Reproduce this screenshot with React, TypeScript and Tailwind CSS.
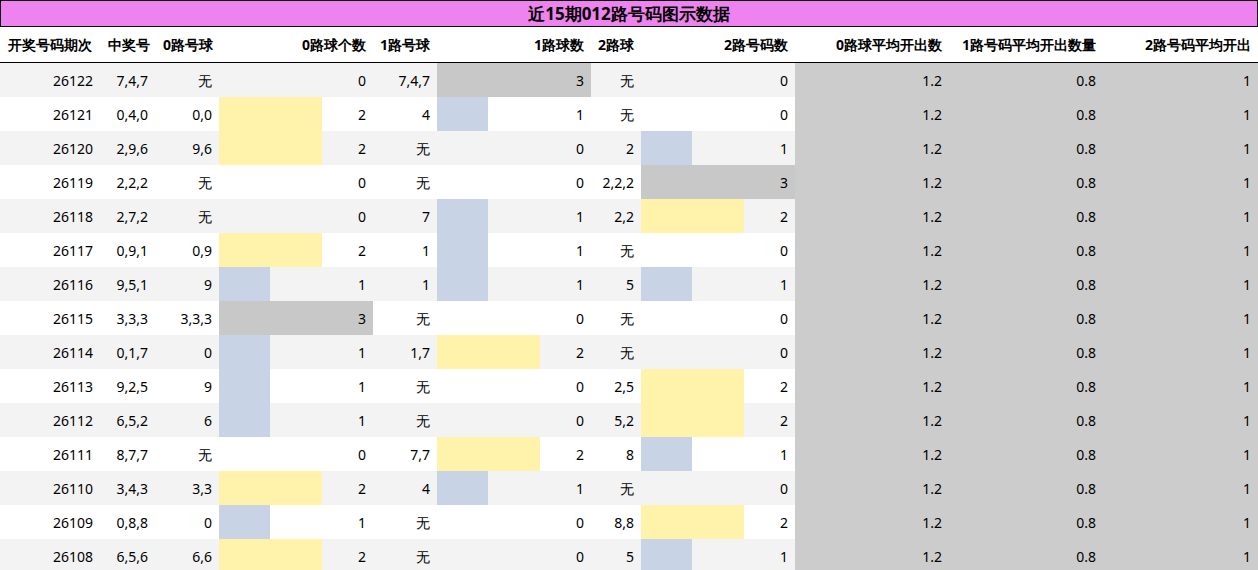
const ROWS: [string, string, string, number, string, number, string, number][] = [
  ["26122", "7,4,7", "无", 0, "7,4,7", 3, "无", 0],
  ["26121", "0,4,0", "0,0", 2, "4", 1, "无", 0],
  ["26120", "2,9,6", "9,6", 2, "无", 0, "2", 1],
  ["26119", "2,2,2", "无", 0, "无", 0, "2,2,2", 3],
  ["26118", "2,7,2", "无", 0, "7", 1, "2,2", 2],
  ["26117", "0,9,1", "0,9", 2, "1", 1, "无", 0],
  ["26116", "9,5,1", "9", 1, "1", 1, "5", 1],
  ["26115", "3,3,3", "3,3,3", 3, "无", 0, "无", 0],
  ["26114", "0,1,7", "0", 1, "1,7", 2, "无", 0],
  ["26113", "9,2,5", "9", 1, "无", 0, "2,5", 2],
  ["26112", "6,5,2", "6", 1, "无", 0, "5,2", 2],
  ["26111", "8,7,7", "无", 0, "7,7", 2, "8", 1],
  ["26110", "3,4,3", "3,3", 2, "4", 1, "无", 0],
  ["26109", "0,8,8", "0", 1, "无", 0, "8,8", 2],
  ["26108", "6,5,6", "6,6", 2, "无", 0, "5", 1],
];

const BAR: Record<number, string> = {
  0: "w-0",
  1: "w-[51px] bg-[#c9d3e6]",
  2: "w-[103px] bg-[#fff2ab]",
  3: "w-full bg-[#c8c8c8]",
};

const COLS = "grid grid-cols-[100px_55px_64px_154px_64px_154px_50px_154px_154px_154px_155px]";

function BarCell({ n }: { n: number }) {
  return (
    <div className="relative h-full">
      <div className={`absolute inset-y-0 left-0 ${BAR[n]}`} />
      <span className="relative flex h-full items-center justify-end pr-[7px]">{n}</span>
    </div>
  );
}

function Cell({ children }: { children: React.ReactNode }) {
  return <div className="flex h-full items-center justify-end pr-[7px]">{children}</div>;
}

export default function App() {
  const heads = ["开奖号码期次", "中奖号", "0路号球", "0路球个数", "1路号球", "1路球数", "2路球", "2路号码数", "0路球平均开出数", "1路号码平均开出数量", "2路号码平均开出"];
  return (
    <div className="w-[1258px] h-[570px] overflow-hidden bg-white text-[14px] text-black font-['Liberation_Sans','Noto_Sans_CJK_SC',sans-serif]">
      <div className="h-[27px] border border-black bg-[#ee82ee] flex items-center justify-center font-bold text-[17px] font-['Liberation_Serif','Noto_Sans_CJK_SC',serif]">
        近15期012路号码图示数据
      </div>
      <div className={`${COLS} h-[36px] border-b border-black font-bold`}>
        {heads.map((h, i) => (
          <div key={h} className={`flex items-center whitespace-nowrap pr-[7px] ${i < 3 ? "justify-start pl-[8px]" : "justify-end"} ${i === 1 || i === 2 ? "pl-[7px]" : ""}`}>
            {h}
          </div>
        ))}
      </div>
      {ROWS.map((r, i) => (
        <div key={r[0]} className={`${COLS} h-[34px] ${i % 2 === 0 ? "bg-[#f3f3f3]" : "bg-white"}`}>
          <Cell>{r[0]}</Cell>
          <Cell>{r[1]}</Cell>
          <Cell>{r[2]}</Cell>
          <BarCell n={r[3]} />
          <Cell>{r[4]}</Cell>
          <BarCell n={r[5]} />
          <Cell>{r[6]}</Cell>
          <BarCell n={r[7]} />
          <div className="bg-[#cccccc]"><Cell>1.2</Cell></div>
          <div className="bg-[#cccccc]"><Cell>0.8</Cell></div>
          <div className="bg-[#cccccc]"><Cell>1</Cell></div>
        </div>
      ))}
    </div>
  );
}
